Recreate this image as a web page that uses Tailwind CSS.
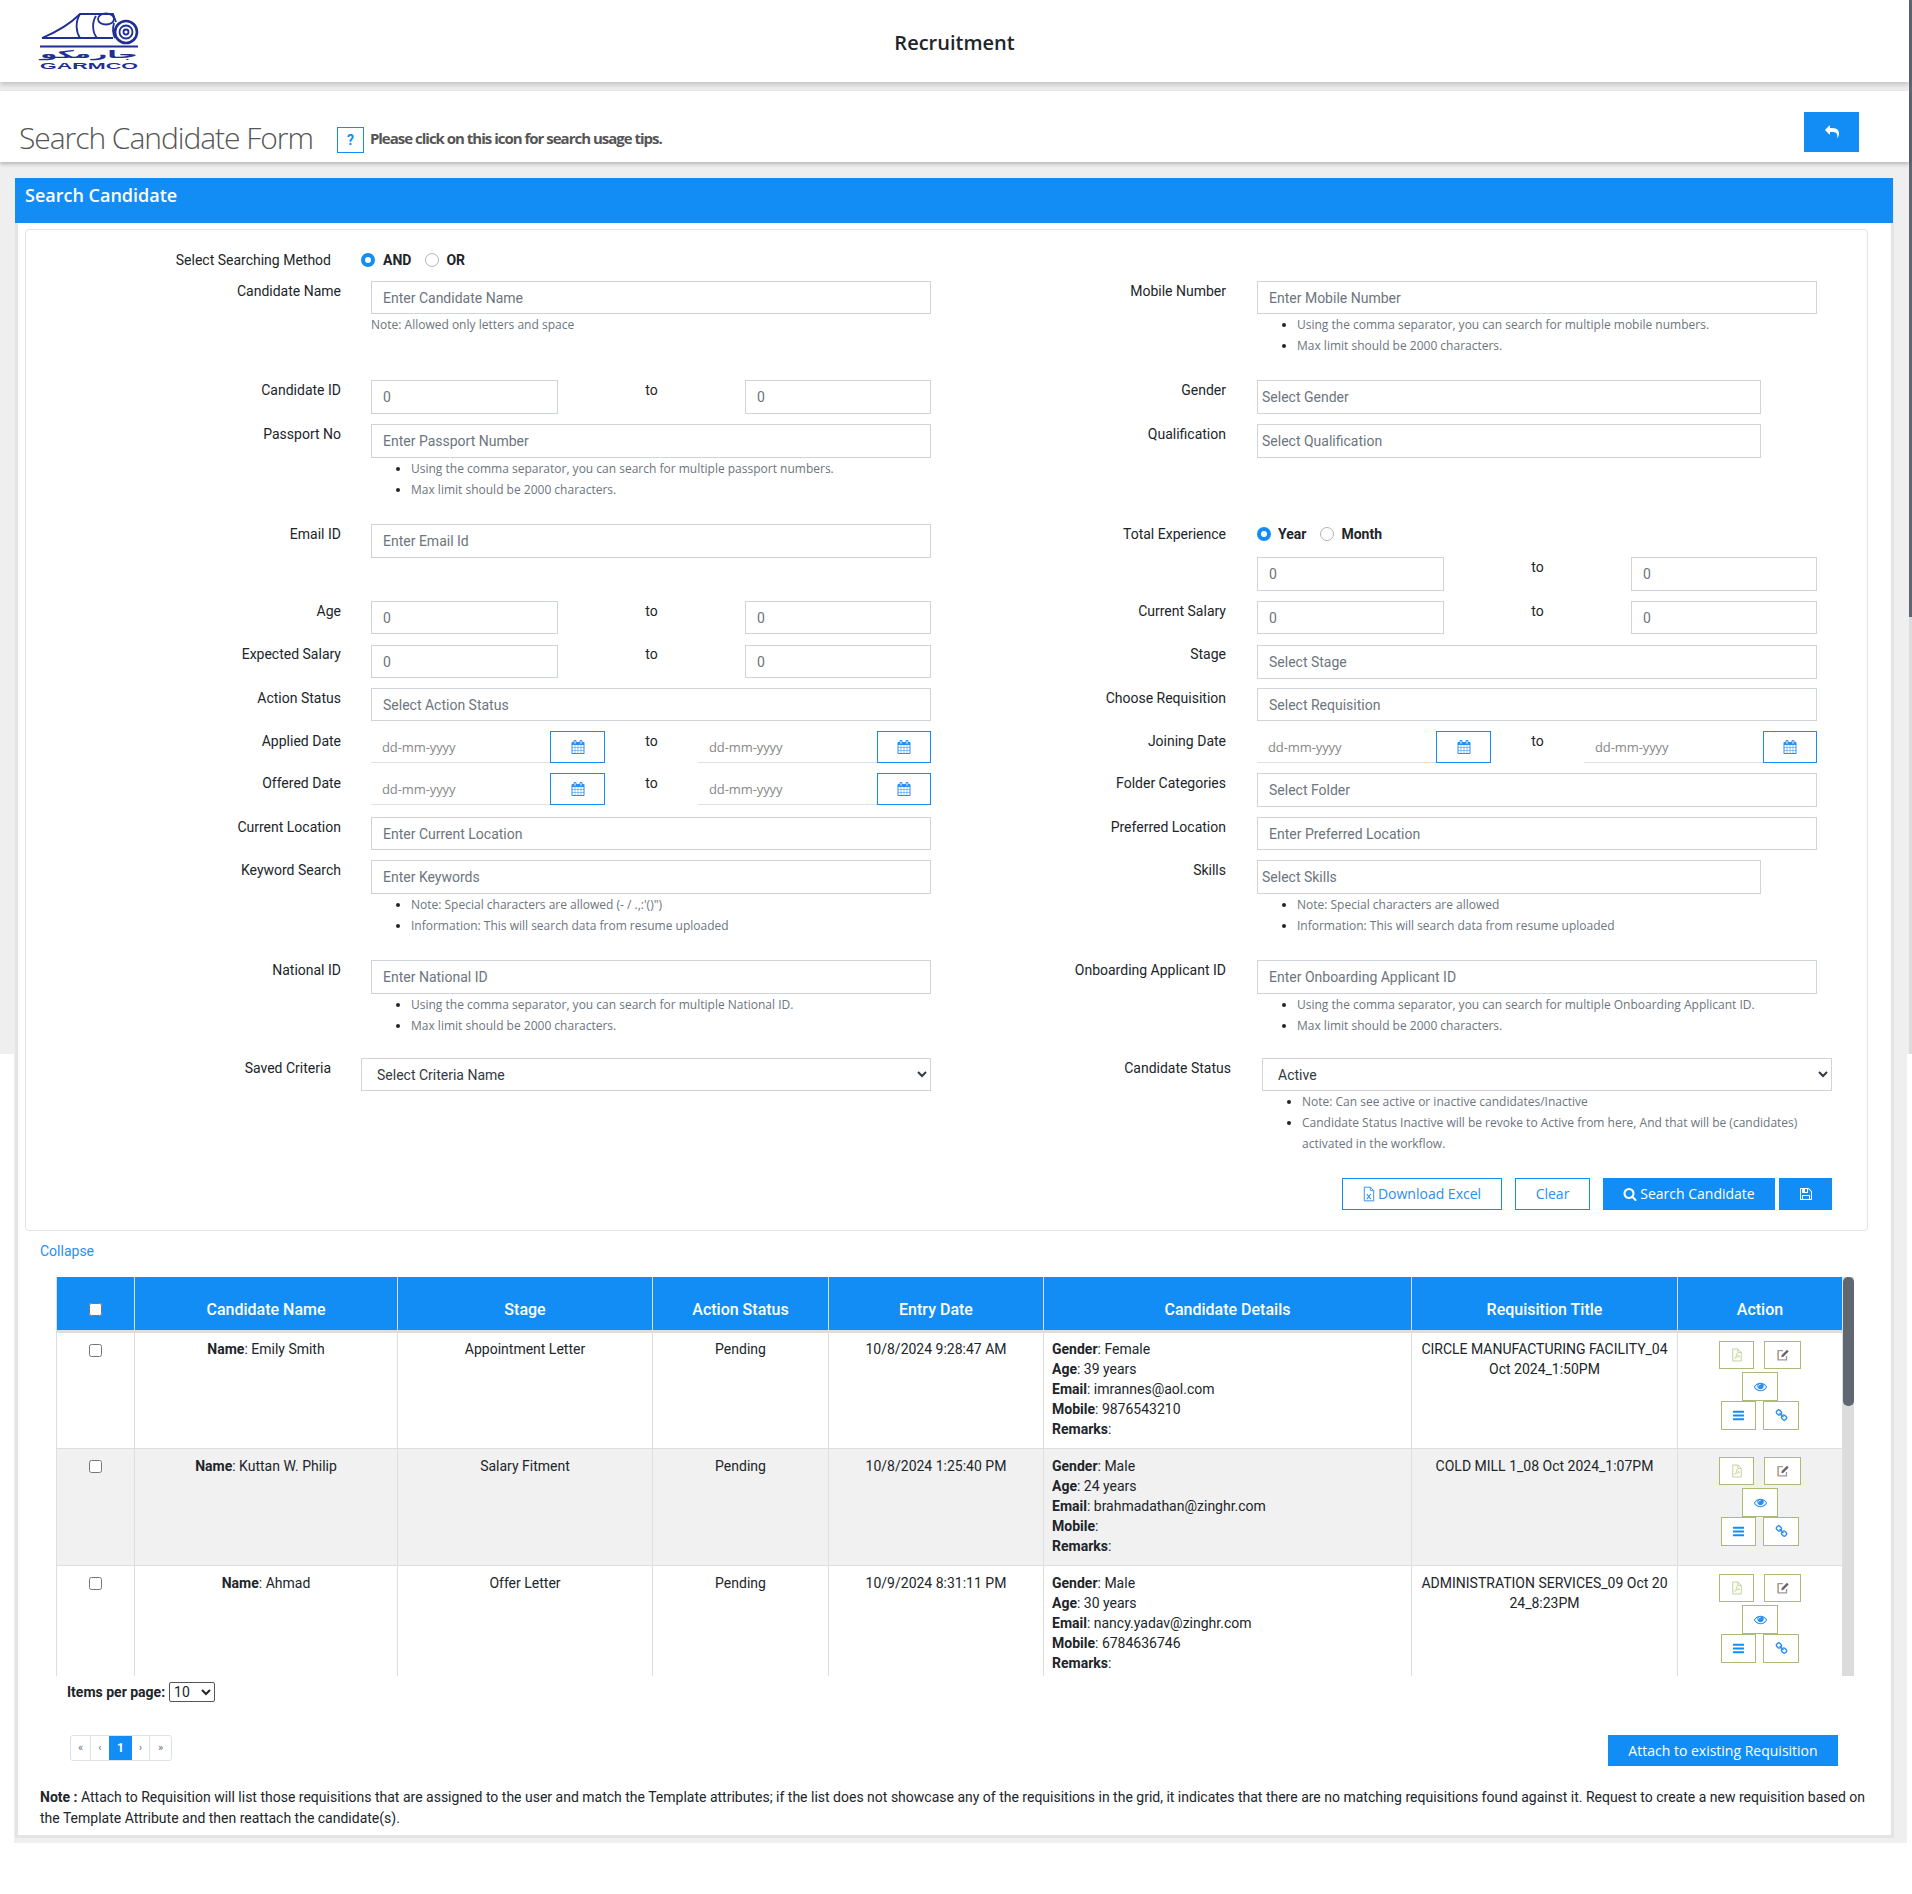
<!DOCTYPE html>
<html lang="en">
<head>
  <meta charset="UTF-8" />
  <meta name="viewport" content="width=device-width, initial-scale=1" />
  <title>Search Candidate Form</title>
  <script src="https://cdn.jsdelivr.net/npm/@tailwindcss/browser@4"></script>
</head>
<body class="bg-white">
  <svg class="hidden">
    <symbol id="i-cal" viewBox="0 0 1792 1792"><path d="M192 1664h288v-288h-288v288zm352 0h320v-288h-320v288zm-352-352h288v-320h-288v320zm352 0h320v-320h-320v320zm-352-384h288v-288h-288v288zm736 736h320v-288h-320v288zm-384-736h320v-288h-320v288zm768 736h288v-288h-288v288zm-384-352h320v-320h-320v320zm-352-864v-288q0-13-9.5-22.5t-22.5-9.5h-64q-13 0-22.5 9.5t-9.5 22.5v288q0 13 9.5 22.5t22.5 9.5h64q13 0 22.5-9.5t9.5-22.5zm736 864h288v-320h-288v320zm-384-384h320v-288h-320v288zm384 0h288v-288h-288v288zm32-480v-288q0-13-9.5-22.5t-22.5-9.5h-64q-13 0-22.5 9.5t-9.5 22.5v288q0 13 9.5 22.5t22.5 9.5h64q13 0 22.5-9.5t9.5-22.5zm384-64v1280q0 52-38 90t-90 38h-1408q-52 0-90-38t-38-90v-1280q0-52 38-90t90-38h128v-96q0-66 47-113t113-47h64q66 0 113 47t47 113v96h384v-96q0-66 47-113t113-47h64q66 0 113 47t47 113v96h128q52 0 90 38t38 90z"/></symbol>
    <symbol id="i-search" viewBox="0 0 1792 1792"><path d="M1216 832q0-185-131.5-316.5t-316.5-131.5-316.5 131.5-131.5 316.5 131.5 316.5 316.5 131.5 316.5-131.5 131.5-316.5zm512 832q0 52-38 90t-90 38q-54 0-90-38l-343-342q-179 124-399 124-143 0-273.5-55.5t-225-150-150-225-55.5-273.5 55.5-273.5 150-225 225-150 273.5-55.5 273.5 55.5 225 150 150 225 55.5 273.5q0 220-124 399l343 343q37 37 37 90z"/></symbol>
    <symbol id="i-save" viewBox="0 0 1792 1792"><path d="M512 1536h768v-384h-768v384zm896 0h128v-896q0-14-10-38.5t-20-34.5l-281-281q-10-10-34-20t-39-10v416q0 40-28 68t-68 28h-576q-40 0-68-28t-28-68v-416h-128v1280h128v-416q0-40 28-68t68-28h832q40 0 68 28t28 68v416zm-384-928v-320q0-13-9.5-22.5t-22.5-9.5h-192q-13 0-22.5 9.5t-9.5 22.5v320q0 13 9.5 22.5t22.5 9.5h192q13 0 22.5-9.5t9.5-22.5zm640 32v928q0 40-28 68t-68 28h-1344q-40 0-68-28t-28-68v-1344q0-40 28-68t68-28h928q40 0 88 20t76 48l280 280q28 28 48 76t20 88z"/></symbol>
    <symbol id="i-reply" viewBox="0 0 1792 1792"><path d="M1792 1120q0 166-127 451-3 7-10.5 24t-13.5 30-13 22q-12 17-28 17-15 0-23.5-10t-8.5-25q0-9 2.5-26.5t2.5-23.5q5-68 5-123 0-101-17.5-181t-48.5-138.5-80-101-105.5-69.5-133-42.5-154-21.5-175.5-6h-224v256q0 26-19 45t-45 19-45-19l-512-512q-19-19-19-45t19-45l512-512q19-19 45-19t45 19 19 45v256h224q713 0 875 403 53 134 53 333z"/></symbol>
    <symbol id="i-eye" viewBox="0 0 1792 1792"><path d="M1664 960q-152-236-381-353 61 104 61 225 0 185-131.5 316.5t-316.5 131.5-316.5-131.5-131.5-316.5q0-121 61-225-229 117-381 353 133 205 333.5 326.5t434.5 121.5 434.5-121.5 333.5-326.5zm-720-384q0-20-14-34t-34-14q-125 0-214.5 89.5t-89.5 214.5q0 20 14 34t34 14 34-14 14-34q0-86 61-147t147-61q20 0 34-14t14-34zm848 384q0 34-20 69-140 230-376.5 368.5t-499.5 138.5-499.5-139-376.5-368q-20-35-20-69t20-69q140-229 376.5-368t499.5-139 499.5 139 376.5 368q20 35 20 69z"/></symbol>
    <symbol id="i-bars" viewBox="0 0 1792 1792"><path d="M1664 1344v128q0 26-19 45t-45 19h-1408q-26 0-45-19t-19-45v-128q0-26 19-45t45-19h1408q26 0 45 19t19 45zm0-512v128q0 26-19 45t-45 19h-1408q-26 0-45-19t-19-45v-128q0-26 19-45t45-19h1408q26 0 45 19t19 45zm0-512v128q0 26-19 45t-45 19h-1408q-26 0-45-19t-19-45v-128q0-26 19-45t45-19h1408q26 0 45 19t19 45z"/></symbol>
    <symbol id="i-link" viewBox="0 0 1792 1792"><path d="M1520 1216q0-40-28-68l-208-208q-28-28-68-28-42 0-72 32 3 3 19 18.5t21.5 21.5 15 19 13 25.5 3.5 27.5q0 40-28 68t-68 28q-15 0-27.5-3.5t-25.5-13-19-15-21.5-21.5-18.5-19q-33 31-33 73 0 40 28 68l206 207q27 27 68 27 40 0 68-26l147-146q28-28 28-67zm-703-705q0-40-28-68l-206-207q-28-28-68-28-39 0-68 27l-147 146q-28 28-28 67 0 40 28 68l208 208q27 27 68 27 42 0 72-31-3-3-19-18.5t-21.5-21.5-15-19-13-25.5-3.5-27.5q0-40 28-68t68-28q15 0 27.5 3.5t25.5 13 19 15 21.5 21.5 18.5 19q33-31 33-73zm895 705q0 120-85 203l-147 146q-83 83-203 83-121 0-204-85l-206-207q-83-83-83-203 0-123 88-209l-88-88q-86 88-208 88-120 0-204-84l-208-208q-84-84-84-204t85-203l147-146q83-83 203-83 121 0 204 85l206 207q83 83 83 203 0 123-88 209l88 88q86-88 208-88 120 0 204 84l208 208q84 84 84 204z"/></symbol>
    <symbol id="i-pdf" viewBox="0 0 14 16"><path d="M2 1h6l4 4v10H2z" fill="#fdfdf0" stroke="#b9cda0"/><path d="M8 1v4h4" fill="none" stroke="#b9cda0"/><path d="M4 12c2-1 3-4 2.800-6 .6 2 2 3.500 3.400 3.600-2 .2-4.500 1-6.200 2.400z" fill="none" stroke="#b2c79a" stroke-width=".7"/></symbol>
    <symbol id="i-edit" viewBox="0 0 16 16"><path d="M8 3H2.500v10.500H12V9" fill="none" stroke="#9a9a9a" stroke-width="1.500"/><path d="M1.800 3v11" stroke="#e0a870" stroke-width=".8"/><path d="M6 10.500l.6-2.500 6-6 1.900 1.900-6 6z" fill="#666"/></symbol>
    <symbol id="i-excel" viewBox="0 0 14 18"><path d="M1.500 1h7l4 4v12h-11z" fill="none" stroke="#2b8ef0" stroke-width="1.100"/><path d="M8.500 1v4h4" fill="none" stroke="#2b8ef0"/><path d="M4.500 9l4.500 6M9 9l-4.500 6" stroke="#2b8ef0" stroke-width="1.200"/></symbol>
  </svg>

  <div class="relative w-[1912px] h-[1894px] [font-family:Roboto,sans-serif] text-[14px] leading-5 text-[#212529] bg-[linear-gradient(#efefef_0,#efefef_1054px,#ffffff_1054px)]">
    <!-- page scrollbar -->
    <div class="absolute top-0 right-0 w-[3px] h-[1054px] bg-[#dcdcdc]"><div class="w-full h-[617px] bg-[#5f6770]"></div></div>

    <header class="relative z-10 w-[1909px] h-[82px] bg-white shadow-[0_3px_5px_rgba(0,0,0,0.18)] grid grid-cols-[1fr_auto_1fr] items-center">
      <svg class="ml-[38px]" width="102" height="62" viewBox="38 12 102 62">
        <g fill="none" stroke="#1f2f93" stroke-width="1.800">
          <path d="M42 40Q66 30 80 16H113L116 24"/>
          <path d="M42 40H113"/>
          <path d="M80 16C75 24 76 34 80 40"/>
          <path d="M96 18C92 24 92 34 97 40"/>
          <ellipse cx="106" cy="21" rx="8" ry="5.500"/>
          <path d="M114 25C112 32 113 36 115 40"/>
          <circle cx="126" cy="34" r="11" stroke-width="2.600"/>
          <circle cx="126" cy="34" r="6.500" stroke-width="1.800"/>
          <circle cx="126" cy="34" r="2.500" stroke-width="1.800"/>
          <path d="M40 48.500H138" stroke-width="1.800"/>
        </g>
        <text x="40" y="59.500" textLength="98" lengthAdjust="spacingAndGlyphs" fill="#1f2f93" style="font-family:'DejaVu Sans',sans-serif;font-weight:700;font-size:11px">جارمكو</text>
        <text x="40" y="71" textLength="98" lengthAdjust="spacingAndGlyphs" fill="#1f2f93" style="font-family:'Liberation Sans',sans-serif;font-weight:700;font-size:8.500px">GARMCO</text>
      </svg>
      <div class="mt-[3px] [font-family:'Open_Sans',sans-serif] text-[20px] font-semibold">Recruitment</div>
      <div></div>
    </header>

    <div class="relative z-[5] w-[1909px] h-[71px] mt-[9px] bg-white shadow-[0_2px_4px_rgba(0,0,0,0.25)] flex items-start pl-[19px]">
      <h1 class="mt-[26px] [font-family:'Open_Sans',sans-serif] font-light text-[30px] leading-[42px] tracking-[-1.05px] text-[#555]">Search Candidate Form</h1>
      <div class="ml-[24px] mt-[36px] w-[27px] h-[26px] border border-[#128df5] flex items-center justify-center text-[#128df5] font-bold text-[14px]">?</div>
      <div class="ml-[6px] mt-[37px] [font-family:'Open_Sans',sans-serif] font-bold text-[15px] tracking-[-1px] text-[#555]">Please click on this icon for search usage tips.</div>
      <button class="ml-auto mr-[50px] mt-[21px] w-[55px] h-[40px] bg-[#128df5] flex items-center justify-center"><svg class="w-[14px] h-[14px] fill-white"><use href="#i-reply"/></svg></button>
    </div>

    <main class="ml-[14px] w-[1893px] h-[1681px] bg-[#efefef] pt-[16px] pl-px">
      <section class="w-[1879px] bg-white border-x-[3px] border-b-[3px] border-x-[#e4e4e4] border-b-[#e4e4e4]">
        <div class="-ml-[3px] -mr-[2px] h-[45px] bg-[#128df5] text-white [font-family:'Open_Sans',sans-serif] font-semibold text-[18px] leading-[34px] pl-[10px]">Search Candidate</div>

        <!-- search form -->
        <div class="ml-[7px] mt-[6px] w-[1843px] h-[1002px] border border-[#e4e4e4] rounded-[4px]">
          <div class="flex h-[948px]">
            <!-- left column -->
            <div class="w-[919px] shrink-0">
              <div class="flex mt-[20px] h-[31px]">
                <div class="w-[305px] text-right">Select Searching Method</div>
                <div class="ml-[30px] flex items-center h-5 font-bold">
                  <input type="radio" name="method" checked class="appearance-none w-[14px] h-[14px] rounded-full border border-[#adb5bd] checked:border-[4px] checked:border-[#128df5]" />
                  <span class="ml-[8px]">AND</span>
                  <input type="radio" name="method" class="ml-[14px] appearance-none w-[14px] h-[14px] rounded-full border border-[#adb5bd] checked:border-[4px] checked:border-[#128df5]" />
                  <span class="ml-[7px]">OR</span>
                </div>
              </div>

              <div class="flex h-[99px]">
                <div class="w-[315px] text-right">Candidate Name</div>
                <div class="ml-[30px] w-[560px]">
                  <input placeholder="Enter Candidate Name" class="w-full h-[33px] border border-[#ced4da] pl-[11px] placeholder:text-[#6c757d]" />
                  <p class="[font-family:'Open_Sans',sans-serif] text-[12px] leading-[21px] text-[#6c757d]">Note: Allowed only letters and space</p>
                </div>
              </div>

              <div class="flex h-[44px]">
                <div class="w-[315px] text-right">Candidate ID</div>
                <div class="ml-[30px] w-[560px] grid grid-cols-[187px_1fr_186px] h-[34px]">
                  <input value="0" class="h-[34px] border border-[#ced4da] pl-[11px] text-[#6c757d]" />
                  <span class="text-center">to</span>
                  <input value="0" class="h-[34px] border border-[#ced4da] pl-[11px] text-[#6c757d]" />
                </div>
              </div>

              <div class="flex h-[100px]">
                <div class="w-[315px] text-right">Passport No</div>
                <div class="ml-[30px] w-[560px]">
                  <input placeholder="Enter Passport Number" class="w-full h-[34px] border border-[#ced4da] pl-[11px] placeholder:text-[#6c757d]" />
                  <ul class="list-disc pl-[40px] [font-family:'Open_Sans',sans-serif] text-[12px] leading-[21px] text-[#6c757d] marker:text-[#212529]">
                    <li>Using the comma separator, you can search for multiple passport numbers.</li>
                    <li>Max limit should be 2000 characters.</li>
                  </ul>
                </div>
              </div>

              <div class="flex h-[77px]">
                <div class="w-[315px] text-right">Email ID</div>
                <input placeholder="Enter Email Id" class="ml-[30px] w-[560px] h-[34px] border border-[#ced4da] pl-[11px] placeholder:text-[#6c757d]" />
              </div>

              <div class="flex h-[44px]">
                <div class="w-[315px] text-right">Age</div>
                <div class="ml-[30px] w-[560px] grid grid-cols-[187px_1fr_186px] h-[34px]">
                  <input value="0" class="h-[33px] border border-[#ced4da] pl-[11px] text-[#6c757d]" />
                  <span class="text-center">to</span>
                  <input value="0" class="h-[33px] border border-[#ced4da] pl-[11px] text-[#6c757d]" />
                </div>
              </div>

              <div class="flex h-[43px]">
                <div class="w-[315px] text-right -mt-px">Expected Salary</div>
                <div class="ml-[30px] w-[560px] grid grid-cols-[187px_1fr_186px] h-[34px]">
                  <input value="0" class="h-[33px] border border-[#ced4da] pl-[11px] text-[#6c757d]" />
                  <span class="text-center -mt-px">to</span>
                  <input value="0" class="h-[33px] border border-[#ced4da] pl-[11px] text-[#6c757d]" />
                </div>
              </div>

              <div class="flex h-[43px]">
                <div class="w-[315px] text-right">Action Status</div>
                <input placeholder="Select Action Status" class="ml-[30px] w-[560px] h-[33px] border border-[#ced4da] pl-[11px] placeholder:text-[#6c757d]" />
              </div>

              <div class="flex h-[42px]">
                <div class="w-[315px] text-right">Applied Date</div>
                <div class="ml-[30px] w-[560px] grid grid-cols-[234px_1fr_233px] h-[32px]">
                  <div class="flex">
                    <input placeholder="dd-mm-yyyy" class="w-[179px] h-[32px] border-b border-[#dee2e6] pl-[11px] [font-family:'Open_Sans',sans-serif] text-[13px] tracking-[-0.1px] placeholder:text-[#888]" />
                    <button class="w-[55px] h-[32px] border border-[#128df5] flex items-center justify-center"><svg class="w-[14px] h-[14px] fill-[#2b8ef0]"><use href="#i-cal"/></svg></button>
                  </div>
                  <span class="text-center">to</span>
                  <div class="flex">
                    <input placeholder="dd-mm-yyyy" class="w-[179px] h-[32px] border-b border-[#dee2e6] pl-[11px] [font-family:'Open_Sans',sans-serif] text-[13px] tracking-[-0.1px] placeholder:text-[#888]" />
                    <button class="w-[54px] h-[32px] border border-[#128df5] flex items-center justify-center"><svg class="w-[14px] h-[14px] fill-[#2b8ef0]"><use href="#i-cal"/></svg></button>
                  </div>
                </div>
              </div>

              <div class="flex h-[44px]">
                <div class="w-[315px] text-right">Offered Date</div>
                <div class="ml-[30px] w-[560px] grid grid-cols-[234px_1fr_233px] h-[32px]">
                  <div class="flex">
                    <input placeholder="dd-mm-yyyy" class="w-[179px] h-[32px] border-b border-[#dee2e6] pl-[11px] [font-family:'Open_Sans',sans-serif] text-[13px] tracking-[-0.1px] placeholder:text-[#888]" />
                    <button class="w-[55px] h-[32px] border border-[#128df5] flex items-center justify-center"><svg class="w-[14px] h-[14px] fill-[#2b8ef0]"><use href="#i-cal"/></svg></button>
                  </div>
                  <span class="text-center">to</span>
                  <div class="flex">
                    <input placeholder="dd-mm-yyyy" class="w-[179px] h-[32px] border-b border-[#dee2e6] pl-[11px] [font-family:'Open_Sans',sans-serif] text-[13px] tracking-[-0.1px] placeholder:text-[#888]" />
                    <button class="w-[54px] h-[32px] border border-[#128df5] flex items-center justify-center"><svg class="w-[14px] h-[14px] fill-[#2b8ef0]"><use href="#i-cal"/></svg></button>
                  </div>
                </div>
              </div>

              <div class="flex h-[43px]">
                <div class="w-[315px] text-right">Current Location</div>
                <input placeholder="Enter Current Location" class="ml-[30px] w-[560px] h-[33px] border border-[#ced4da] pl-[11px] placeholder:text-[#6c757d]" />
              </div>

              <div class="flex h-[100px]">
                <div class="w-[315px] text-right">Keyword Search</div>
                <div class="ml-[30px] w-[560px]">
                  <input placeholder="Enter Keywords" class="w-full h-[34px] border border-[#ced4da] pl-[11px] placeholder:text-[#6c757d]" />
                  <ul class="list-disc pl-[40px] [font-family:'Open_Sans',sans-serif] text-[12px] leading-[21px] text-[#6c757d] marker:text-[#212529]">
                    <li>Note: Special characters are allowed (- / .,:'()")</li>
                    <li>Information: This will search data from resume uploaded</li>
                  </ul>
                </div>
              </div>

              <div class="flex h-[98px]">
                <div class="w-[315px] text-right">National ID</div>
                <div class="ml-[30px] w-[560px]">
                  <input placeholder="Enter National ID" class="w-full h-[34px] border border-[#ced4da] pl-[11px] placeholder:text-[#6c757d]" />
                  <ul class="list-disc pl-[40px] [font-family:'Open_Sans',sans-serif] text-[12px] leading-[21px] text-[#6c757d] marker:text-[#212529]">
                    <li>Using the comma separator, you can search for multiple National ID.</li>
                    <li>Max limit should be 2000 characters.</li>
                  </ul>
                </div>
              </div>

              <div class="flex">
                <div class="w-[305px] text-right">Saved Criteria</div>
                <select class="ml-[30px] w-[570px] h-[33px] border border-[#ced4da] pl-[11px] text-[14px] text-[#343a40]"><option>Select Criteria Name</option></select>
              </div>
            </div>

            <!-- right column -->
            <div class="w-[922px] shrink-0">
              <div class="h-[51px]"></div>

              <div class="flex h-[99px]">
                <div class="w-[281px] text-right">Mobile Number</div>
                <div class="ml-[31px] w-[560px]">
                  <input placeholder="Enter Mobile Number" class="w-full h-[33px] border border-[#ced4da] pl-[11px] placeholder:text-[#6c757d]" />
                  <ul class="list-disc pl-[40px] [font-family:'Open_Sans',sans-serif] text-[12px] leading-[21px] text-[#6c757d] marker:text-[#212529]">
                    <li>Using the comma separator, you can search for multiple mobile numbers.</li>
                    <li>Max limit should be 2000 characters.</li>
                  </ul>
                </div>
              </div>

              <div class="flex h-[44px]">
                <div class="w-[281px] text-right">Gender</div>
                <input placeholder="Select Gender" class="ml-[31px] w-[504px] h-[34px] border border-[#ced4da] pl-[4px] placeholder:text-[#6c757d]" />
              </div>

              <div class="flex h-[100px]">
                <div class="w-[281px] text-right">Qualification</div>
                <input placeholder="Select Qualification" class="ml-[31px] w-[504px] h-[34px] border border-[#ced4da] pl-[4px] placeholder:text-[#6c757d]" />
              </div>

              <div class="flex h-[33px]">
                <div class="w-[281px] text-right">Total Experience</div>
                <div class="ml-[31px] flex items-center h-5 font-bold">
                  <input type="radio" name="experience" checked class="appearance-none w-[14px] h-[14px] rounded-full border border-[#adb5bd] checked:border-[4px] checked:border-[#128df5]" />
                  <span class="ml-[7px]">Year</span>
                  <input type="radio" name="experience" class="ml-[14px] appearance-none w-[14px] h-[14px] rounded-full border border-[#adb5bd] checked:border-[4px] checked:border-[#128df5]" />
                  <span class="ml-[7px]">Month</span>
                </div>
              </div>

              <div class="flex h-[44px]">
                <div class="w-[281px]"></div>
                <div class="ml-[31px] w-[560px] grid grid-cols-[187px_1fr_186px] h-[34px]">
                  <input value="0" class="h-[34px] border border-[#ced4da] pl-[11px] text-[#6c757d]" />
                  <span class="text-center">to</span>
                  <input value="0" class="h-[34px] border border-[#ced4da] pl-[11px] text-[#6c757d]" />
                </div>
              </div>

              <div class="flex h-[44px]">
                <div class="w-[281px] text-right">Current Salary</div>
                <div class="ml-[31px] w-[560px] grid grid-cols-[187px_1fr_186px] h-[34px]">
                  <input value="0" class="h-[33px] border border-[#ced4da] pl-[11px] text-[#6c757d]" />
                  <span class="text-center">to</span>
                  <input value="0" class="h-[33px] border border-[#ced4da] pl-[11px] text-[#6c757d]" />
                </div>
              </div>

              <div class="flex h-[43px]">
                <div class="w-[281px] text-right -mt-px">Stage</div>
                <input placeholder="Select Stage" class="ml-[31px] w-[560px] h-[34px] border border-[#ced4da] pl-[11px] placeholder:text-[#6c757d]" />
              </div>

              <div class="flex h-[43px]">
                <div class="w-[281px] text-right">Choose Requisition</div>
                <input placeholder="Select Requisition" class="ml-[31px] w-[560px] h-[33px] border border-[#ced4da] pl-[11px] placeholder:text-[#6c757d]" />
              </div>

              <div class="flex h-[42px]">
                <div class="w-[281px] text-right">Joining Date</div>
                <div class="ml-[31px] w-[560px] grid grid-cols-[234px_1fr_233px] h-[32px]">
                  <div class="flex">
                    <input placeholder="dd-mm-yyyy" class="w-[179px] h-[32px] border-b border-[#dee2e6] pl-[11px] [font-family:'Open_Sans',sans-serif] text-[13px] tracking-[-0.1px] placeholder:text-[#888]" />
                    <button class="w-[55px] h-[32px] border border-[#128df5] flex items-center justify-center"><svg class="w-[14px] h-[14px] fill-[#2b8ef0]"><use href="#i-cal"/></svg></button>
                  </div>
                  <span class="text-center">to</span>
                  <div class="flex">
                    <input placeholder="dd-mm-yyyy" class="w-[179px] h-[32px] border-b border-[#dee2e6] pl-[11px] [font-family:'Open_Sans',sans-serif] text-[13px] tracking-[-0.1px] placeholder:text-[#888]" />
                    <button class="w-[54px] h-[32px] border border-[#128df5] flex items-center justify-center"><svg class="w-[14px] h-[14px] fill-[#2b8ef0]"><use href="#i-cal"/></svg></button>
                  </div>
                </div>
              </div>

              <div class="flex h-[44px]">
                <div class="w-[281px] text-right">Folder Categories</div>
                <input placeholder="Select Folder" class="ml-[31px] w-[560px] h-[34px] border border-[#ced4da] pl-[11px] placeholder:text-[#6c757d]" />
              </div>

              <div class="flex h-[43px]">
                <div class="w-[281px] text-right">Preferred Location</div>
                <input placeholder="Enter Preferred Location" class="ml-[31px] w-[560px] h-[33px] border border-[#ced4da] pl-[11px] placeholder:text-[#6c757d]" />
              </div>

              <div class="flex h-[100px]">
                <div class="w-[281px] text-right">Skills</div>
                <div class="ml-[31px] w-[560px]">
                  <input placeholder="Select Skills" class="w-[504px] h-[34px] border border-[#ced4da] pl-[4px] placeholder:text-[#6c757d]" />
                  <ul class="list-disc pl-[40px] [font-family:'Open_Sans',sans-serif] text-[12px] leading-[21px] text-[#6c757d] marker:text-[#212529]">
                    <li>Note: Special characters are allowed</li>
                    <li>Information: This will search data from resume uploaded</li>
                  </ul>
                </div>
              </div>

              <div class="flex h-[98px]">
                <div class="w-[281px] text-right">Onboarding Applicant ID</div>
                <div class="ml-[31px] w-[560px]">
                  <input placeholder="Enter Onboarding Applicant ID" class="w-full h-[34px] border border-[#ced4da] pl-[11px] placeholder:text-[#6c757d]" />
                  <ul class="list-disc pl-[40px] [font-family:'Open_Sans',sans-serif] text-[12px] leading-[21px] text-[#6c757d] marker:text-[#212529]">
                    <li>Using the comma separator, you can search for multiple Onboarding Applicant ID.</li>
                    <li>Max limit should be 2000 characters.</li>
                  </ul>
                </div>
              </div>

              <div class="flex">
                <div class="w-[286px] text-right">Candidate Status</div>
                <div class="ml-[31px] w-[570px]">
                  <select class="w-full h-[33px] border border-[#ced4da] pl-[11px] text-[14px] text-[#343a40]"><option>Active</option></select>
                  <ul class="list-disc pl-[40px] [font-family:'Open_Sans',sans-serif] text-[12px] leading-[21px] text-[#6c757d] marker:text-[#212529]">
                    <li>Note: Can see active or inactive candidates/Inactive</li>
                    <li>Candidate Status Inactive will be revoke to Active from here, And that will be (candidates) activated in the workflow.</li>
                  </ul>
                </div>
              </div>
            </div>
          </div>

          <div class="flex justify-end pr-[35px] h-[32px] [font-family:'Open_Sans',sans-serif] text-[14px]">
            <button class="w-[160px] h-[32px] border border-[#128df5] text-[#2b8ef0] flex items-center justify-center gap-[3px]"><svg class="w-[12px] h-[16px]"><use href="#i-excel"/></svg>Download Excel</button>
            <button class="ml-[13px] w-[75px] h-[32px] border border-[#128df5] text-[#2b8ef0]">Clear</button>
            <button class="ml-[13px] w-[172px] h-[32px] bg-[#128df5] text-white flex items-center justify-center gap-[3px]"><svg class="w-[14px] h-[14px] fill-white"><use href="#i-search"/></svg>Search Candidate</button>
            <button class="ml-[4px] w-[53px] h-[32px] bg-[#128df5] flex items-center justify-center"><svg class="w-[14px] h-[14px] fill-white"><use href="#i-save"/></svg></button>
          </div>
        </div>

        <a class="block ml-[22px] mt-[10px] h-[36px] text-[#2b8ef0]">Collapse</a>

        <!-- candidates grid -->
        <div class="ml-[38px] flex h-[399px] overflow-hidden">
          <table class="w-[1786px] h-fit table-fixed border-collapse">
            <colgroup>
              <col class="w-[78px]" /><col class="w-[263px]" /><col class="w-[255px]" /><col class="w-[176px]" /><col class="w-[215px]" /><col class="w-[368px]" /><col class="w-[266px]" /><col class="w-[165px]" />
            </colgroup>
            <thead>
              <tr class="h-[54px] bg-[#128df5] text-white text-[16px] leading-6 font-medium border-b-[3px] border-[#dedede]">
                <th class="border-x border-[#dedede] align-bottom pb-[8px] font-medium"><input type="checkbox" class="block mx-auto mb-[6px]" /></th>
                <th class="border-x border-[#dedede] align-bottom pb-[8px] font-medium">Candidate Name</th>
                <th class="border-x border-[#dedede] align-bottom pb-[8px] font-medium">Stage</th>
                <th class="border-x border-[#dedede] align-bottom pb-[8px] font-medium">Action Status</th>
                <th class="border-x border-[#dedede] align-bottom pb-[8px] font-medium">Entry Date</th>
                <th class="border-x border-[#dedede] align-bottom pb-[8px] font-medium">Candidate Details</th>
                <th class="border-x border-[#dedede] align-bottom pb-[8px] font-medium">Requisition Title</th>
                <th class="border-x border-[#dedede] align-bottom pb-[8px] font-medium">Action</th>
              </tr>
            </thead>
            <tbody>
              <tr class="h-[117px] border-b border-[#dedede]">
                <td class="border-x border-[#dedede] align-top pt-[11px]"><input type="checkbox" class="block mx-auto" /></td>
                <td class="border-x border-[#dedede] align-top pt-[6px] text-center"><b class="font-bold">Name</b>: Emily Smith</td>
                <td class="border-x border-[#dedede] align-top pt-[6px] text-center">Appointment Letter</td>
                <td class="border-x border-[#dedede] align-top pt-[6px] text-center">Pending</td>
                <td class="border-x border-[#dedede] align-top pt-[6px] text-center">10/8/2024 9:28:47 AM</td>
                <td class="border-x border-[#dedede] align-top pt-[6px] pl-[8px]"><b class="font-bold">Gender</b>: Female<br /><b class="font-bold">Age</b>: 39 years<br /><b class="font-bold">Email</b>: imrannes@aol.com<br /><b class="font-bold">Mobile</b>: 9876543210<br /><b class="font-bold">Remarks</b>:</td>
                <td class="border-x border-[#dedede] align-top pt-[6px] text-center px-[8px]">CIRCLE MANUFACTURING FACILITY_04 Oct 2024_1:50PM</td>
                <td class="border-x border-[#dedede] align-top pt-[8px]">
                  <div class="flex justify-center gap-[10px]">
                    <button class="w-[35px] h-[28px] bg-white border border-[#a9bb74] flex items-center justify-center"><svg class="w-[12px] h-[14px]"><use href="#i-pdf"/></svg></button>
                    <button class="w-[37px] h-[28px] bg-white border border-[#a9bb74] flex items-center justify-center"><svg class="w-[14px] h-[14px]"><use href="#i-edit"/></svg></button>
                  </div>
                  <div class="flex justify-center mt-[3px]"><button class="w-[36px] h-[29px] bg-white border border-[#a9bb74] flex items-center justify-center"><svg class="w-[13px] h-[13px] fill-[#2b8ef0]"><use href="#i-eye"/></svg></button></div>
                  <div class="flex justify-center gap-[7px]">
                    <button class="w-[35px] h-[29px] bg-white border border-[#a9bb74] flex items-center justify-center"><svg class="w-[13px] h-[13px] fill-[#128df5]"><use href="#i-bars"/></svg></button>
                    <button class="w-[36px] h-[29px] bg-white border border-[#a9bb74] flex items-center justify-center"><svg class="w-[13px] h-[13px] fill-[#2b8ef0]"><use href="#i-link"/></svg></button>
                  </div>
                </td>
              </tr>
              <tr class="h-[117px] bg-[#f1f1f1] border-b border-[#dedede]">
                <td class="border-x border-[#dedede] align-top pt-[11px]"><input type="checkbox" class="block mx-auto" /></td>
                <td class="border-x border-[#dedede] align-top pt-[7px] text-center"><b class="font-bold">Name</b>: Kuttan W. Philip</td>
                <td class="border-x border-[#dedede] align-top pt-[7px] text-center">Salary Fitment</td>
                <td class="border-x border-[#dedede] align-top pt-[7px] text-center">Pending</td>
                <td class="border-x border-[#dedede] align-top pt-[7px] text-center">10/8/2024 1:25:40 PM</td>
                <td class="border-x border-[#dedede] align-top pt-[7px] pl-[8px]"><b class="font-bold">Gender</b>: Male<br /><b class="font-bold">Age</b>: 24 years<br /><b class="font-bold">Email</b>: brahmadathan@zinghr.com<br /><b class="font-bold">Mobile</b>:<br /><b class="font-bold">Remarks</b>:</td>
                <td class="border-x border-[#dedede] align-top pt-[7px] text-center px-[8px]">COLD MILL 1_08 Oct 2024_1:07PM</td>
                <td class="border-x border-[#dedede] align-top pt-[8px]">
                  <div class="flex justify-center gap-[10px]">
                    <button class="w-[35px] h-[28px] bg-white border border-[#a9bb74] flex items-center justify-center"><svg class="w-[12px] h-[14px]"><use href="#i-pdf"/></svg></button>
                    <button class="w-[37px] h-[28px] bg-white border border-[#a9bb74] flex items-center justify-center"><svg class="w-[14px] h-[14px]"><use href="#i-edit"/></svg></button>
                  </div>
                  <div class="flex justify-center mt-[3px]"><button class="w-[36px] h-[29px] bg-white border border-[#a9bb74] flex items-center justify-center"><svg class="w-[13px] h-[13px] fill-[#2b8ef0]"><use href="#i-eye"/></svg></button></div>
                  <div class="flex justify-center gap-[7px]">
                    <button class="w-[35px] h-[29px] bg-white border border-[#a9bb74] flex items-center justify-center"><svg class="w-[13px] h-[13px] fill-[#128df5]"><use href="#i-bars"/></svg></button>
                    <button class="w-[36px] h-[29px] bg-white border border-[#a9bb74] flex items-center justify-center"><svg class="w-[13px] h-[13px] fill-[#2b8ef0]"><use href="#i-link"/></svg></button>
                  </div>
                </td>
              </tr>
              <tr class="h-[117px] border-b border-[#dedede]">
                <td class="border-x border-[#dedede] align-top pt-[11px]"><input type="checkbox" class="block mx-auto" /></td>
                <td class="border-x border-[#dedede] align-top pt-[7px] text-center"><b class="font-bold">Name</b>: Ahmad</td>
                <td class="border-x border-[#dedede] align-top pt-[7px] text-center">Offer Letter</td>
                <td class="border-x border-[#dedede] align-top pt-[7px] text-center">Pending</td>
                <td class="border-x border-[#dedede] align-top pt-[7px] text-center">10/9/2024 8:31:11 PM</td>
                <td class="border-x border-[#dedede] align-top pt-[7px] pl-[8px]"><b class="font-bold">Gender</b>: Male<br /><b class="font-bold">Age</b>: 30 years<br /><b class="font-bold">Email</b>: nancy.yadav@zinghr.com<br /><b class="font-bold">Mobile</b>: 6784636746<br /><b class="font-bold">Remarks</b>:</td>
                <td class="border-x border-[#dedede] align-top pt-[7px] text-center px-[8px]">ADMINISTRATION SERVICES_09 Oct 20<br />24_8:23PM</td>
                <td class="border-x border-[#dedede] align-top pt-[8px]">
                  <div class="flex justify-center gap-[10px]">
                    <button class="w-[35px] h-[28px] bg-white border border-[#a9bb74] flex items-center justify-center"><svg class="w-[12px] h-[14px]"><use href="#i-pdf"/></svg></button>
                    <button class="w-[37px] h-[28px] bg-white border border-[#a9bb74] flex items-center justify-center"><svg class="w-[14px] h-[14px]"><use href="#i-edit"/></svg></button>
                  </div>
                  <div class="flex justify-center mt-[3px]"><button class="w-[36px] h-[29px] bg-white border border-[#a9bb74] flex items-center justify-center"><svg class="w-[13px] h-[13px] fill-[#2b8ef0]"><use href="#i-eye"/></svg></button></div>
                  <div class="flex justify-center gap-[7px]">
                    <button class="w-[35px] h-[29px] bg-white border border-[#a9bb74] flex items-center justify-center"><svg class="w-[13px] h-[13px] fill-[#128df5]"><use href="#i-bars"/></svg></button>
                    <button class="w-[36px] h-[29px] bg-white border border-[#a9bb74] flex items-center justify-center"><svg class="w-[13px] h-[13px] fill-[#2b8ef0]"><use href="#i-link"/></svg></button>
                  </div>
                </td>
              </tr>
            </tbody>
          </table>
          <div class="w-[11px] bg-[#dcdcdc]"><div class="h-[129px] bg-[#5f6770] rounded-[5px]"></div></div>
        </div>

        <div class="ml-[49px] mt-[6px] h-[20px] flex items-center font-bold">
          Items per page:
          <select class="ml-[4px] w-[46px] h-[20px] border border-[#555] rounded-[2px] font-normal"><option>10</option></select>
        </div>

        <div class="mt-[33px] flex justify-between pl-[52px] pr-[53px] h-[31px]">
          <nav class="flex h-[26px] border border-[#dee2e6] rounded-[3px] text-[11px] text-[#6c757d] leading-[24px] text-center">
            <span class="w-[20px] border-r border-[#dee2e6]">«</span>
            <span class="w-[18px]">‹</span>
            <span class="w-[23px] bg-[#128df5] text-white font-bold text-[12px]">1</span>
            <span class="w-[18px] border-r border-[#dee2e6]">›</span>
            <span class="w-[21px]">»</span>
          </nav>
          <button class="w-[230px] h-[31px] bg-[#128df5] text-white [font-family:'Open_Sans',sans-serif] text-[14px]">Attach to existing Requisition</button>
        </div>

        <p class="ml-[22px] mt-[21px] pb-[7px] mr-[20px] leading-[20.5px]"><b class="font-bold">Note :</b> Attach to Requisition will list those requisitions that are assigned to the user and match the Template attributes; if the list does not showcase any of the requisitions in the grid, it indicates that there are no matching requisitions found against it. Request to create a new requisition based on the Template Attribute and then reattach the candidate(s).</p>
      </section>
    </main>
  </div>
</body>
</html>
